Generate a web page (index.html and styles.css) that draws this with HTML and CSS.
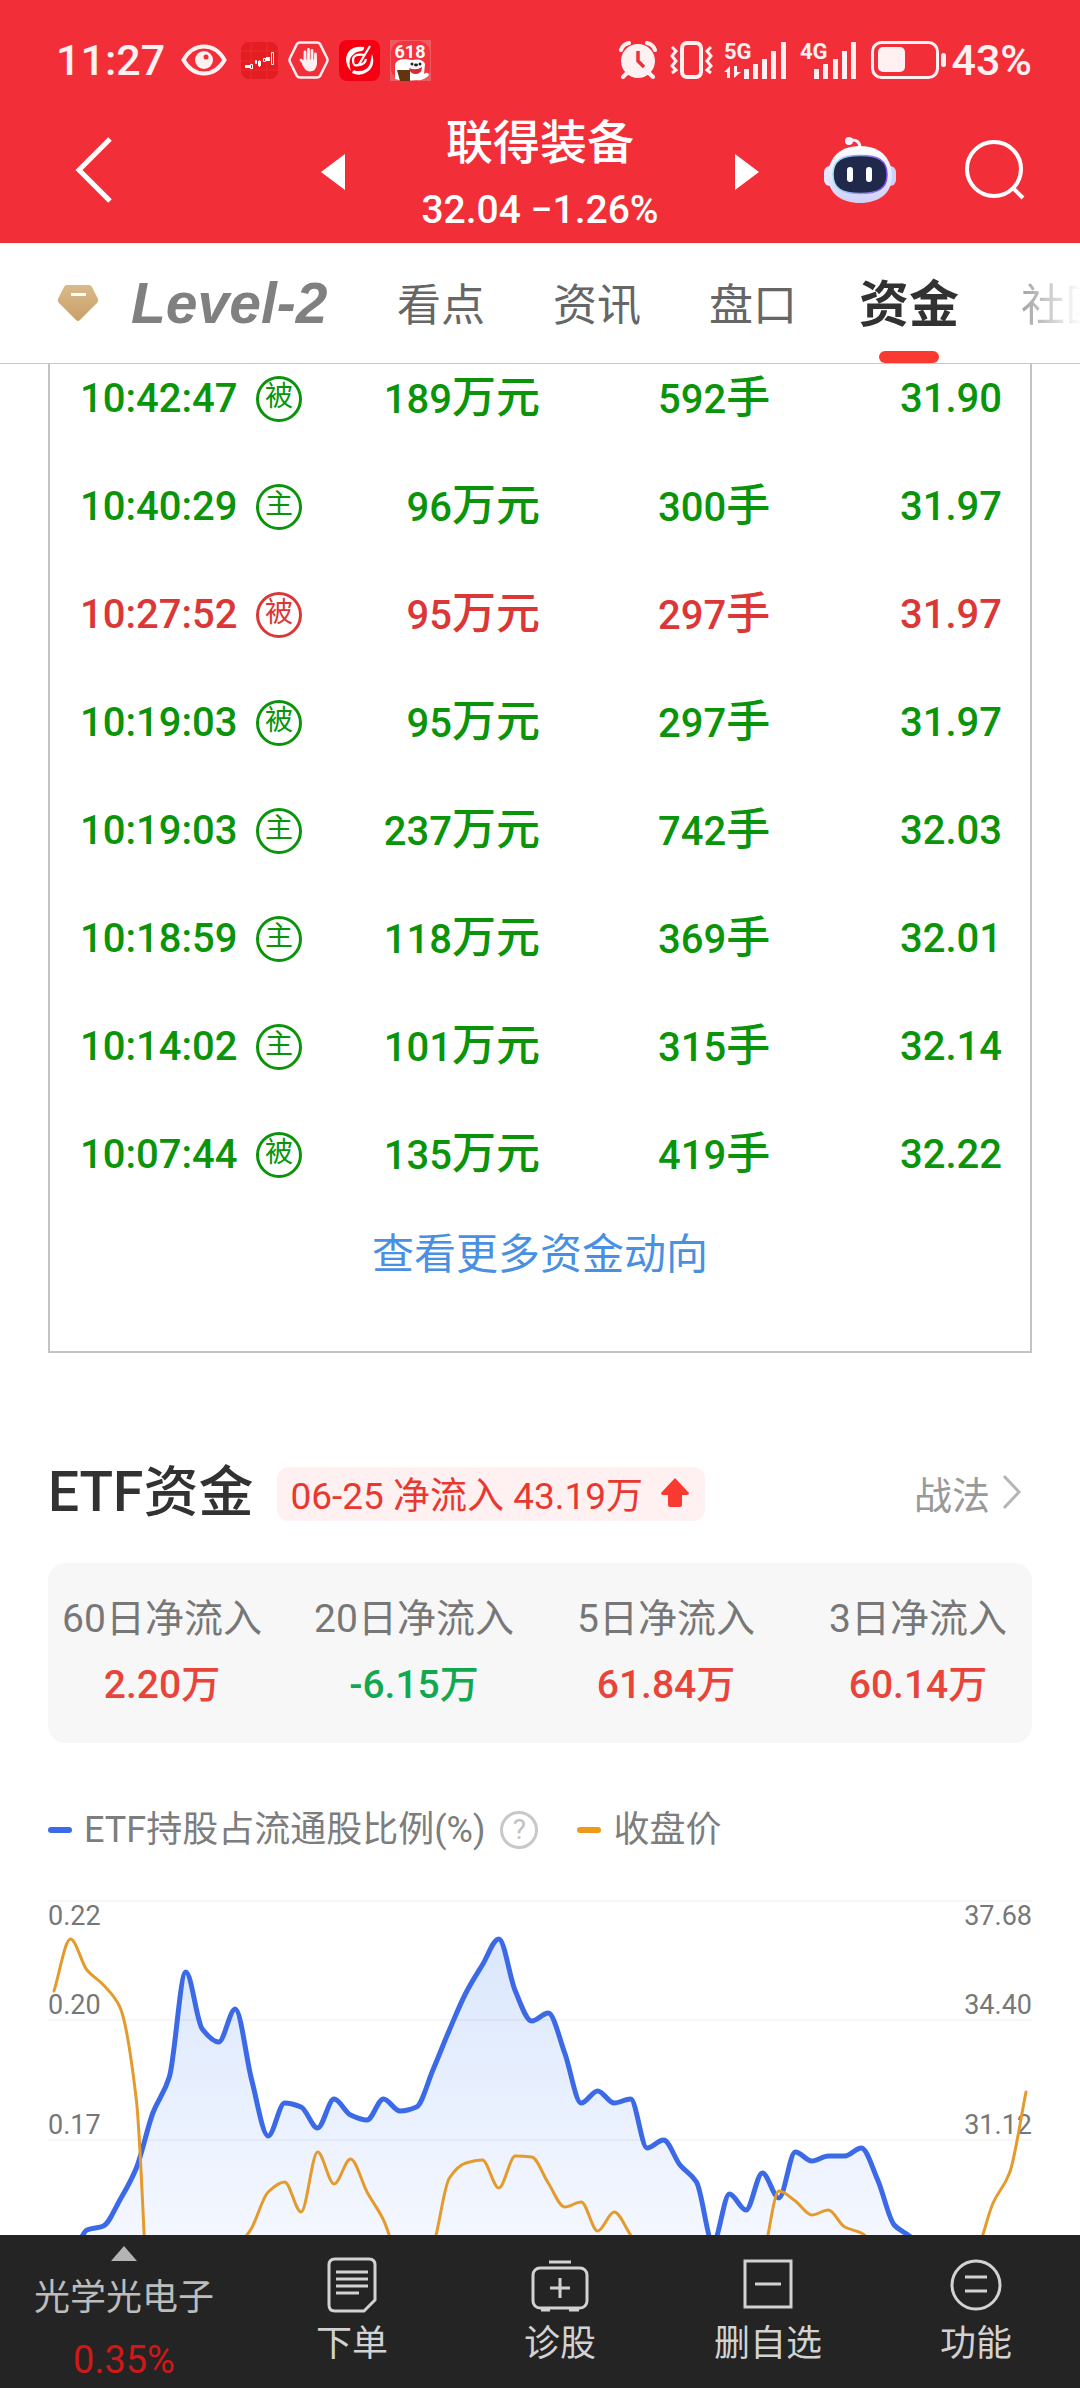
FILE: index.html
```html
<!DOCTYPE html>
<html lang="zh-CN">
<head>
<meta charset="utf-8">
<meta name="viewport" content="width=device-width">
<title>联得装备 - 资金</title>
<link rel="stylesheet" href="styles.css">
</head>
<body>
<header class="top">
  <div class="status">
    <span class="clock">11:27</span>
    <svg class="s-eye" width="46" height="32" viewBox="0 0 46 32" fill="none"><path d="M2.500 16Q10 2.500 23 2.500T43.500 16Q36 29.500 23 29.500T2.500 16Z" stroke="#fff0f1" stroke-width="4"/><circle cx="23" cy="16" r="9" fill="#fff0f1"/><circle cx="25" cy="13" r="2.500" fill="#f22f38"/></svg>
    <svg class="s-app" width="37" height="37" viewBox="0 0 37 37"><rect width="37" height="37" rx="8" fill="#e41d22"/><path d="M0 9H37M0 19H37M0 28H37M10 0V37M26 0V37" stroke="#ea2c2f" stroke-width="1"/><g fill="#fff"><path d="M4 23h5v3H4zM17 19h3v5h-3zM25 15h4v4h-4zM18 18h1v7h-1z"/><path d="M9.500 22.500h2v4h-2zM14.500 18.500h1v3h-1zM22.500 16.500h2v3h-2zM30.500 10.500h2v12h-2z" fill="none" stroke="#fff" stroke-width="1"/></g></svg>
    <svg class="s-hand" width="41" height="38" viewBox="0 0 41 38" fill="none"><path d="M12 1.500H29Q31 1.500 32 3L39 17Q40 19 39 21L32 35Q31 36.500 29 36.500H12Q10 36.500 9 35L2 21Q1 19 2 17L9 3Q10 1.500 12 1.500Z" stroke="#fff0f1" stroke-width="2.500"/><path d="M13 19L17 24M17 11V20M20.500 8.500V20M24 9.500V20M27.500 13V22" stroke="#fff0f1" stroke-width="2.800" stroke-linecap="round"/><path d="M15.500 18.500H29V23Q28 30.500 22 30.500Q17 30.500 14 23Z" fill="#fff0f1"/></svg>
    <svg class="s-app" width="41" height="41" viewBox="0 0 41 41" fill="none"><rect width="41" height="41" rx="8" fill="#f40012"/><path d="M25 7Q9 5 7 19Q7 26 12 31Q9 22 12 17Q16 11 23 11Q26 9 25 7Z" fill="#fff"/><path d="M33 14Q37 26 28 32Q21 37 13 33Q14 29 17 31Q28 32 31 24Q32 20 33 14Z" fill="#fff"/><path d="M31 6L19 26M26 15Q14 13 14 20T19 25Q26 25 27 19" stroke="#fff" stroke-width="2.200"/></svg>
    <svg class="s-app" width="41" height="41" viewBox="0 0 41 41"><rect width="41" height="41" fill="#ee5a62"/><rect x="1" y="1" width="39" height="39" rx="12" fill="#f6323c"/><text x="20" y="18" text-anchor="middle" class="promo">618</text><path d="M5 25Q6 19 15 19L22 20Q33 18 35 24L34 34Q38 31 39 35Q34 41 27 40L13 41L5 39Z" fill="#fff"/><circle cx="22" cy="24" r="1.500" fill="#222"/><circle cx="30" cy="24" r="1.500" fill="#222"/><ellipse cx="26" cy="25" rx="2" ry="1.400" fill="#222"/><path d="M19 28Q26 31 32 27Q32 34 26 34Q20 34 19 28Z" fill="#d92836"/><path d="M7 30H20V41H10Z" fill="#61350f"/></svg>
    <span class="grow"></span>
    <svg class="s-alarm" width="38" height="38" viewBox="0 0 38 38" fill="none" stroke="#fff0f1"><circle cx="19" cy="20" r="17" fill="#fff0f1" stroke="none"/><path d="M2 9Q4 3 10 2M36 9Q34 3 28 2" stroke-width="4" stroke-linecap="round"/><path d="M8 32L4 36M30 32L34 36" stroke-width="4" stroke-linecap="round"/><path d="M19 10V20L25 26" stroke="#f22f38" stroke-width="3.500"/></svg>
    <svg class="s-vib" width="43" height="38" viewBox="0 0 43 38" fill="none" stroke="#fff0f1"><rect x="12" y="2" width="19" height="34" rx="5" stroke-width="4"/><path d="M2 6L6 10L2 15L6 20L2 25L6 29L2 32M41 6L37 10L41 15L37 20L41 25L37 29L41 32" stroke-width="3"/></svg>
    <svg class="s-net" width="63" height="38" viewBox="0 0 63 38" fill="#fff0f1"><text x="0" y="18" class="net">5G</text><path d="M20 28h5v10h-5zM29 23h5v15h-5zM38 18h5v20h-5zM47 10h5v28h-5zM57 1h5v37h-5zM0 31L6 25V37H3V31zM17 31L10 37V25H13V31z"/></svg>
    <svg class="s-net" width="58" height="38" viewBox="0 0 58 38" fill="#fff0f1"><text x="0" y="18" class="net">4G</text><path d="M14 28h5v10h-5zM23 23h5v15h-5zM33 18h5v20h-5zM42 10h5v28h-5zM51 1h5v37h-5z"/></svg>
    <svg class="s-bat" width="76" height="38" viewBox="0 0 76 38" fill="none"><rect x="1.500" y="1.500" width="65" height="35" rx="9" stroke="#fff0f1" stroke-width="3"/><rect x="7" y="6" width="27" height="25" rx="5" fill="#fff0f1"/><rect x="70" y="12" width="5" height="14" rx="2.500" fill="#fff0f1"/></svg>
    <span class="level">43%</span>
  </div>
  <div class="titlebar">
    <button class="icon-btn back" aria-label="返回"><svg width="38" height="68" viewBox="0 0 38 68" fill="none" stroke="#fff" stroke-width="5"><path d="M35 3L4 34L35 65"/></svg></button>
    <div class="switcher">
      <button class="icon-btn" aria-label="上一只"><svg width="24" height="36" viewBox="0 0 24 36"><path d="M24 0V36L0 18Z" fill="#fff"/></svg></button>
      <div class="stock"><h1>联得装备</h1><p>32.04 −1.26%</p></div>
      <button class="icon-btn" aria-label="下一只"><svg width="24" height="36" viewBox="0 0 24 36"><path d="M0 0V36L24 18Z" fill="#fff"/></svg></button>
    </div>
    <div class="tools">
      <button class="icon-btn" aria-label="智能助手"><svg width="74" height="68" viewBox="0 0 74 68" fill="none"><defs><linearGradient id="shell" x2="0" y2="1"><stop stop-color="#fff"/><stop offset="1" stop-color="#cfd0f8"/></linearGradient><linearGradient id="rim"><stop stop-color="#9be8f8"/><stop offset="1" stop-color="#7c4be8"/></linearGradient></defs><path d="M27 4Q37 3 37 12" stroke="#f1effc" stroke-width="3"/><circle cx="26" cy="5" r="4" fill="#f4f0fc"/><rect x="1" y="30" width="12" height="20" rx="6" fill="#e5e7ff"/><rect x="61" y="30" width="12" height="20" rx="6" fill="#cfd0f8"/><path d="M37 10C60 10 69 25 69 40C69 58 55 67 37 67S5 58 5 40C5 25 14 10 37 10Z" fill="url(#shell)"/><path d="M37 19.500C55 19.500 64 24 64 38.500C64 53 55 57.500 37 57.500S10 53 10 38.500C10 24 19 19.500 37 19.500Z" fill="#202949" stroke="url(#rim)" stroke-width="1.500"/><rect x="24" y="31" width="6" height="15" rx="3" fill="#fff"/><rect x="43" y="31" width="6" height="15" rx="3" fill="#fff"/></svg></button>
      <button class="icon-btn" aria-label="搜索"><svg width="60" height="60" viewBox="0 0 60 60" fill="none" stroke="#fff" stroke-width="4"><circle cx="29" cy="29" r="27"/><path d="M47 47L58 58"/></svg></button>
    </div>
  </div>
</header>
<nav class="tabs">
  <a href="#" class="level2"><svg width="42" height="38" viewBox="0 0 42 38"><defs><linearGradient id="gold" x2="0" y2="1"><stop stop-color="#d9b98b"/><stop offset="1" stop-color="#c9a168"/></linearGradient></defs><path d="M10 1H32Q34 1 35 3L41 15Q42 17 40 19L23 36Q21 38 19 36L2 19Q0 17 1 15L7 3Q8 1 10 1Z" fill="url(#gold)"/><rect x="14" y="9" width="15" height="3" fill="#fff"/></svg><span>Level-2</span></a>
  <a href="#" class="tab">看点</a>
  <a href="#" class="tab">资讯</a>
  <a href="#" class="tab">盘口</a>
  <a href="#" class="tab active" aria-current="page">资金</a>
  <a href="#" class="tab fade">社区</a>
</nav>
<main>
  <div class="scroller">
    <section class="flow-box">
      <table class="flows">
        <colgroup><col class="c-time"><col class="c-amount"><col class="c-volume"><col></colgroup>
        <tbody>
          <tr><td><span class="when">10:42:47<i>被</i></span></td><td>189<b>万元</b></td><td>592<b>手</b></td><td>31.90</td></tr>
          <tr><td><span class="when">10:40:29<i>主</i></span></td><td>96<b>万元</b></td><td>300<b>手</b></td><td>31.97</td></tr>
          <tr class="rise"><td><span class="when">10:27:52<i>被</i></span></td><td>95<b>万元</b></td><td>297<b>手</b></td><td>31.97</td></tr>
          <tr><td><span class="when">10:19:03<i>被</i></span></td><td>95<b>万元</b></td><td>297<b>手</b></td><td>31.97</td></tr>
          <tr><td><span class="when">10:19:03<i>主</i></span></td><td>237<b>万元</b></td><td>742<b>手</b></td><td>32.03</td></tr>
          <tr><td><span class="when">10:18:59<i>主</i></span></td><td>118<b>万元</b></td><td>369<b>手</b></td><td>32.01</td></tr>
          <tr><td><span class="when">10:14:02<i>主</i></span></td><td>101<b>万元</b></td><td>315<b>手</b></td><td>32.14</td></tr>
          <tr><td><span class="when">10:07:44<i>被</i></span></td><td>135<b>万元</b></td><td>419<b>手</b></td><td>32.22</td></tr>
        </tbody>
      </table>
      <a href="#" class="more">查看更多资金动向</a>
    </section>
  </div>
  <section class="etf">
    <div class="etf-head">
      <h2>ETF资金</h2>
      <span class="pill">06-25 净流入 43.19万<svg width="28" height="30" viewBox="0 0 28 30"><path d="M14 0L28 15Q28 17 26 17H21V27Q21 29 19 29H9Q7 29 7 27V17H2Q0 17 0 15Z" fill="#fa3a30"/></svg></span>
      <a href="#" class="tactic">战法<svg width="19" height="34" viewBox="0 0 19 34" fill="none" stroke="#b5b5b5" stroke-width="3"><path d="M2 1L17 17L2 33"/></svg></a>
    </div>
    <dl class="periods">
      <div><dt>60日净流入</dt><dd>2.20万</dd></div>
      <div><dt>20日净流入</dt><dd class="fall">-6.15万</dd></div>
      <div><dt>5日净流入</dt><dd>61.84万</dd></div>
      <div><dt>3日净流入</dt><dd>60.14万</dd></div>
    </dl>
    <div class="legend">
      <span class="key blue">ETF持股占流通股比例(%)</span>
      <button class="help" aria-label="说明">?</button>
      <span class="key orange">收盘价</span>
    </div>
    <svg class="chart" viewBox="0 0 984 335">
      <defs><linearGradient id="area" gradientUnits="userSpaceOnUse" x1="0" y1="38" x2="0" y2="335"><stop stop-color="#dbe7fd"/><stop offset="1" stop-color="#f4f7ff"/></linearGradient></defs>
      <path id="holding-area" fill="url(#area)"/>
      <path class="grid" d="M0 1H984M0 120H984M0 240H984"/>
      <g class="axis"><text x="0" y="25">0.22</text><text x="0" y="114">0.20</text><text x="0" y="234">0.17</text></g>
      <g class="axis end"><text x="984" y="25">37.68</text><text x="984" y="114">34.40</text><text x="984" y="234">31.12</text></g>
      <path id="holding" class="line-blue"/>
      <path id="close" class="line-orange"/>
    </svg>
  </section>
</main>
<nav class="bottom">
  <a href="#" class="sector"><svg width="26" height="15" viewBox="0 0 26 15"><path d="M13 0L26 15H0Z" fill="#b4b4b4"/></svg><span>光学光电子</span><em>0.35%</em></a>
  <a href="#"><svg width="50" height="56" viewBox="0 0 50 56" fill="none" stroke="#d2d2d2" stroke-width="3"><path d="M8 2H42Q48 2 48 8V43L37 54H8Q2 54 2 48V8Q2 2 8 2ZM9 15H41M9 22H41M9 29H41M9 36H32"/></svg><span>下单</span></a>
  <a href="#"><svg width="58" height="56" viewBox="0 0 58 56" fill="none" stroke="#d2d2d2" stroke-width="3"><rect x="2" y="11" width="54" height="40" rx="7"/><path d="M18 5H40M29 21V41M19 31H39M10 53H19M38 53H48"/></svg><span>诊股</span></a>
  <a href="#"><svg width="50" height="56" viewBox="0 0 50 56" fill="none" stroke="#d2d2d2" stroke-width="3"><path d="M2 4H48V50H2ZM12 27H38"/></svg><span>删自选</span></a>
  <a href="#"><svg width="54" height="56" viewBox="0 0 54 56" fill="none" stroke="#d2d2d2" stroke-width="3"><circle cx="27" cy="28" r="24"/><path d="M16 20H38M16 34H38"/></svg><span>功能</span></a>
</nav>
<script src="chart.js"></script>
</body>
</html>
```
FILE: styles.css
```css
* { box-sizing: border-box; margin: 0; padding: 0; }
body { background: #fff; color: #323232; font-family: Roboto, "Noto Sans CJK SC", sans-serif; }
a { color: inherit; text-decoration: none; }
svg { display: block; flex: none; }
i, em { font-style: normal; }
.icon-btn { display: flex; border: 0; background: none; }

.top { background: #f22f38; color: #fff; }
.status { display: flex; align-items: center; height: 112px; padding: 8px 48px 0 56px; color: #fff0f1; }
.clock, .level { font-size: 43px; font-weight: 500; line-height: 52px; }
.clock { margin-right: 16px; }
.grow { flex: 1; }
.s-eye { margin-right: 14px; }
.s-app, .s-hand { margin-right: 10px; }
.s-alarm, .s-bat { margin-right: 4px; }
.s-alarm, .s-net { margin-right: 13px; }
.s-vib { margin-right: 11px; }
.s-net { overflow: visible; }
.promo { font-size: 18px; font-weight: 700; fill: #fff; }
.net { font-size: 22px; font-weight: 700; }

.titlebar { display: grid; grid-template-columns: 1fr 438px 1fr; align-items: center; height: 131px; }
.back { padding-left: 75px; margin-top: -24px; }
.switcher { display: flex; align-items: center; justify-content: space-between; height: 100%; }
.switcher .icon-btn { margin-top: -20px; }
.stock { text-align: center; font-weight: 500; }
.stock h1 { font-size: 47px; line-height: 62px; font-weight: 500; }
.stock p { font-size: 39px; line-height: 56px; margin-bottom: 14px; padding-top: 8px; }
.tools { display: flex; align-items: center; justify-content: flex-end; gap: 68px; padding-right: 55px; margin-top: -24px; }

.tabs { display: flex; align-items: center; gap: 56px; height: 121px; padding-left: 57px; border-bottom: 1px solid #c8c8c8; overflow: hidden; font-size: 44px; color: #666; }
.level2 { display: flex; align-items: center; gap: 32px; flex: none; width: 278px; color: #808080; font: italic bold 57px/64px "Liberation Sans", sans-serif; white-space: nowrap; }
.tab { display: flex; flex: none; align-items: center; justify-content: center; width: 100px; height: 100%; padding-bottom: 2px; white-space: nowrap; }
.active { flex-direction: column; justify-content: flex-end; padding-bottom: 0; font-size: 50px; line-height: 60px; font-weight: 700; color: #323232; }
.active::after { content: ""; width: 60px; height: 12px; margin-top: 16px; border-radius: 6px; background: #fa3a30; }
.fade { color: transparent; background: linear-gradient(90deg, #999 0, #ddd 45%, #fff 66%); background-clip: text; -webkit-background-clip: text; }

.scroller { overflow: hidden; padding: 0 48px; }
.flow-box { margin-top: -21px; padding-bottom: 66px; border: 2px solid #c3c3c3; border-top: 0; }
.flows { width: 100%; table-layout: fixed; border-collapse: collapse; color: #0a940a; font-size: 40px; font-weight: 500; }
.c-time { width: 27%; }
.c-amount { width: 23%; }
.c-volume { width: 23.5%; }
.flows td { height: 108px; padding-top: 3px; text-align: right; line-height: 60px; white-space: nowrap; }
.flows td:first-child { padding-left: 30px; text-align: left; }
.flows td:last-child { padding-right: 28px; }
.flows b { font-size: 44px; font-weight: 500; }
.rise { color: #dc3737; }
.when { display: flex; align-items: center; justify-content: space-between; width: 222px; }
.when i { width: 46px; height: 46px; border: 3px solid; border-radius: 50%; font-size: 28px; line-height: 36px; font-weight: 400; text-align: center; }
.more { display: block; padding-top: 18px; text-align: center; font-size: 42px; line-height: 60px; color: #4a90e2; }

.etf { padding: 103px 48px 0; }
.etf-head { display: flex; align-items: center; height: 72px; }
.etf-head h2 { font-size: 55px; font-weight: 500; line-height: 72px; }
.pill { display: flex; align-items: center; gap: 18px; height: 54px; margin: 4px 0 0 24px; padding: 0 16px 2px 13px; border-radius: 12px; background: #fff1f1; color: #e8382f; font-size: 37px; }
.tactic { display: flex; align-items: center; gap: 12px; margin: 0 11px 0 auto; color: #999; font-size: 38px; }
.periods { display: grid; grid-template-columns: repeat(4, calc(25% + 6px)); justify-content: center; height: 180px; margin-top: 35px; border-radius: 18px; background: #f7f7f7; text-align: center; white-space: nowrap; }
.periods dt { padding-top: 26px; font-size: 39px; line-height: 60px; color: #777; }
.periods dd { padding-top: 6px; font-size: 39px; line-height: 60px; font-weight: 500; color: #e8443a; }
.periods .fall { color: #12a850; }
.legend { display: flex; align-items: center; height: 60px; margin-top: 57px; font-size: 36px; line-height: 56px; color: #7d7d7d; }
.key { display: flex; align-items: center; gap: 12px; }
.key::before { content: ""; width: 24px; height: 6px; border-radius: 3px; background: #3c6be8; }
.orange::before { background: #f0981a; }
.help { width: 38px; height: 38px; margin: 0 39px 0 15px; border: 3px solid #c8c8c8; border-radius: 50%; background: none; color: #c0c0c0; font: 28px/30px Roboto, sans-serif; }
.chart { width: 100%; height: auto; margin-top: 40px; overflow: hidden; }
.grid { stroke: #000; stroke-opacity: .07; stroke-width: 1; }
.axis { font-size: 27px; fill: #777; }
.end { text-anchor: end; }
.line-blue, .line-orange { fill: none; stroke-linecap: round; stroke-linejoin: round; }
.line-blue { stroke: #3c6ae6; stroke-width: 5; }
.line-orange { stroke: #e59a2c; stroke-width: 3; }

.bottom { display: grid; grid-template-columns: 248fr repeat(4, 208fr); height: 153px; background: #242424; color: #d2d2d2; font-size: 36px; line-height: 54px; text-align: center; }
.bottom a { display: flex; flex-direction: column; align-items: center; padding-top: 22px; gap: 4px; }
.bottom .sector { padding-top: 11px; gap: 10px; color: #bcbcbc; white-space: nowrap; }
.sector em { font-size: 38px; line-height: 50px; color: #d01818; }
```
FILE: chart.js
```js
// Series heights in chart units, one value per trading day.
var holding = [380, 363, 330, 326, 300, 268, 213, 177, 72, 129, 142, 109, 180, 236, 203, 207, 228, 199, 215, 220, 199, 211, 207, 170, 130, 93, 65, 39, 91, 121, 113, 153, 203, 191, 203, 199, 248, 240, 265, 282, 343, 294, 310, 273, 298, 252, 261, 256, 256, 248, 280, 325, 337, 360, 380, 380, 380, 380, 380, 380];
var close = [91, 39, 70, 85, 107, 200, 470, 500, 500, 480, 420, 353, 328, 292, 282, 312, 252, 284, 259, 292, 320, 363, 380, 347, 278, 263, 260, 288, 256, 257, 283, 307, 302, 331, 312, 335, 360, 380, 380, 380, 380, 380, 380, 358, 291, 301, 315, 310, 327, 333, 347, 360, 380, 380, 380, 380, 353, 303, 273, 192];
var START = 6, END = 978;

// Monotone cubic path, so that the curve never overshoots a value.
function curve(values) {
  var step = (END - START) / (values.length - 1);
  var slopes = values.map(function (v, i) {
    if (i === 0) return values[1] - v;
    if (i === values.length - 1) return v - values[i - 1];
    var a = v - values[i - 1], b = values[i + 1] - v;
    return a * b <= 0 ? 0 : 2 * a * b / (a + b);
  });
  var d = 'M' + START + ' ' + values[0];
  for (var i = 1; i < values.length; i++) {
    var x0 = START + step * (i - 1), x1 = START + step * i;
    d += 'C' + [x0 + step / 3, values[i - 1] + slopes[i - 1] / 3, x1 - step / 3, values[i] - slopes[i] / 3, x1, values[i]].join(' ');
  }
  return d;
}

var line = curve(holding);
document.getElementById('holding').setAttribute('d', line);
document.getElementById('holding-area').setAttribute('d', line + 'V600H' + START + 'Z');
document.getElementById('close').setAttribute('d', curve(close));
```
